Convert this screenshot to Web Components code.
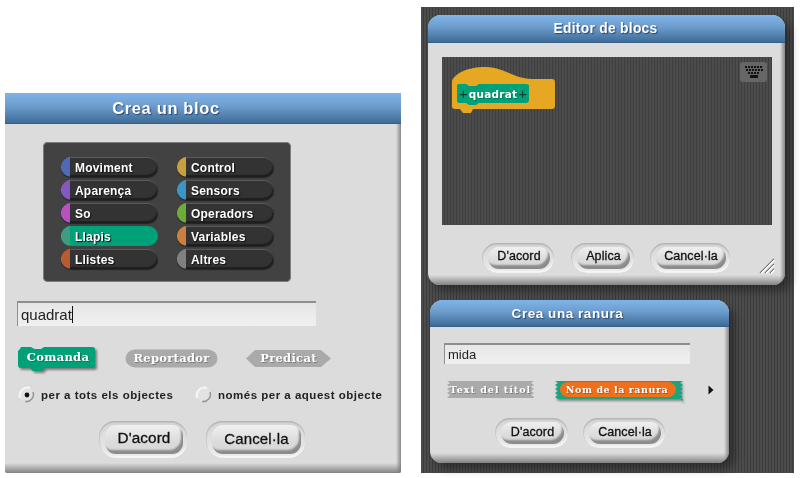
<!DOCTYPE html>
<html>
<head>
<meta charset="utf-8">
<title>Crea un bloc</title>
<style>
    html, body { margin: 0; padding: 0; background: white; }
    body { width: 800px; height: 478px; overflow: hidden; position: relative; font-family: "Liberation Sans", sans-serif; filter: blur(.4px); }
    .stripes {
        position: absolute; left: 421px; top: 7px; width: 373px; height: 466px;
        background: repeating-linear-gradient(90deg, #4c4c4c 0 2px, #3c3c3c 2px 3px);
    }
    #create { left: 5px; top: 93px; width: 396px; height: 380px; }
    #editor { left: 428px; top: 15px; width: 357px; height: 270px; }
    #slot { left: 430px; top: 300px; width: 299px; height: 163px; }
</style>
</head>
<body>
<div class="stripes"></div>

<snap-dialog id="create" square title-height="31" title-size="16.5" title-spacing=".65" title-shift="-37" heading="Crea un bloc">
    <div style="display:flex;flex-direction:column;padding:18px 0 0 12px">
        <snap-palette style="margin-left:26px">
            <snap-category color="#5068b8">Moviment</snap-category>
            <snap-category color="#c9a040">Control</snap-category>
            <snap-category color="#8458c0">Aparença</snap-category>
            <snap-category color="#3c94c8">Sensors</snap-category>
            <snap-category color="#b850c0">So</snap-category>
            <snap-category color="#6cac38">Operadors</snap-category>
            <snap-category color="#3f9c80" active>Llapis</snap-category>
            <snap-category color="#cc8040">Variables</snap-category>
            <snap-category color="#b85c30">Llistes</snap-category>
            <snap-category color="#808080">Altres</snap-category>
        </snap-palette>
        <snap-input style="margin-top:19px;width:299px;height:25px;font-size:15px" caret>quadrat</snap-input>
        <div style="display:flex;align-items:flex-end;margin:20px 0 0 1px;height:26px">
            <snap-block shape="command" w="80" h="26">Comanda</snap-block>
            <snap-block shape="reporter" w="93" h="19" style="margin-left:27px;margin-bottom:4px">Reportador</snap-block>
            <snap-block shape="predicate" w="85" h="19" style="margin-left:28px;margin-bottom:4px">Predicat</snap-block>
        </div>
        <div style="display:flex;align-items:center;margin-top:13px;height:20px">
            <snap-radio checked style="width:177px">per a tots els objectes</snap-radio>
            <snap-radio>només per a aquest objecte</snap-radio>
        </div>
        <div style="display:flex;margin:16px 0 0 82px;gap:19px">
            <snap-button style="width:88px;height:37px;font-size:15.3px">D'acord</snap-button>
            <snap-button style="width:99px;height:37px;font-size:15px">Cancel·la</snap-button>
        </div>
    </div>
</snap-dialog>

<snap-dialog id="editor" title-height="28" title-size="13.8" title-spacing=".3" title-shift="-1" heading="Editor de blocs">
    <div style="display:flex;flex-direction:column;padding:14px 0 0 14px">
        <snap-scripts style="width:330px;height:168px"></snap-scripts>
        <div style="display:flex;margin:16px 0 0 40px;align-items:center">
            <snap-button style="width:72px;height:30px;font-size:12.5px">D'acord</snap-button>
            <snap-button style="width:63px;height:30px;font-size:12.5px;margin-left:17px">Aplica</snap-button>
            <snap-button style="width:80px;height:30px;font-size:12.5px;margin-left:16px">Cancel·la</snap-button>
            <svg width="16" height="16" viewBox="0 0 16 16" style="margin:17px 0 0 29px" fill="none" stroke-width="1.2">
                <path d="M1 15L15 1M6 15L15 6M11 15L15 11" stroke="#6c6c6c"/>
                <path d="M2 15.5L15.5 2M7 15.5L15.5 7M12 15.5L15.5 12" stroke="#fff"/>
            </svg>
        </div>
    </div>
</snap-dialog>

<snap-dialog id="slot" title-height="27" title-size="13.5" title-spacing=".55" title-shift="-12" heading="Crea una ranura">
    <div style="display:flex;flex-direction:column;padding:16px 0 0 14px">
        <snap-input style="width:246px;height:21px;font-size:13px">mida</snap-input>
        <div style="display:flex;align-items:center;margin-top:15px;height:21px">
            <snap-block shape="fragment" w="87" h="19" size="9.5" spacing="1" style="margin-left:3px">Text del títol</snap-block>
            <snap-block shape="slot" w="128" h="20" size="9.5" spacing=".55" shift="4" style="margin-left:21px">Nom de la ranura</snap-block>
            <svg width="6" height="10" viewBox="0 0 6 10" style="margin-left:25px"><path d="M0.5 0.5L5.5 5L0.5 9.5Z" fill="#111"/></svg>
        </div>
        <div style="display:flex;margin:18px 0 0 51px;gap:15px">
            <snap-button style="width:73px;height:30px;font-size:12.5px">D'acord</snap-button>
            <snap-button style="width:82px;height:30px;font-size:12.5px">Cancel·la</snap-button>
        </div>
    </div>
</snap-dialog>

<script>
const FONT = '"Liberation Sans", Arial, sans-serif';
const BLOCK_FONT = '"DejaVu Serif", "Liberation Serif", serif';

class SnapDialog extends HTMLElement {
    constructor() {
        super();
        this.attachShadow({ mode: 'open' });
    }
    connectedCallback() {
        const h = this.getAttribute('title-height') || 28;
        const size = this.getAttribute('title-size') || 14;
        const spacing = this.getAttribute('title-spacing') || 0.4;
        const shift = this.getAttribute('title-shift') || 0;
        const radius = this.hasAttribute('square') ? 0 : 13;
        const bottom = this.hasAttribute('square') ? 2 : 12;
        this.shadowRoot.innerHTML = `
            <style>
                :host {
                    position: absolute; display: flex; flex-direction: column;
                    background: #dcdcdc; font-family: ${FONT};
                    border-radius: ${radius}px ${radius}px ${bottom}px ${bottom}px;
                    box-shadow: 6px 6px 8px rgba(0,0,0,${radius ? .35 : 0});
                    overflow: hidden;
                }
                .title {
                    flex: none; height: ${h}px; display: flex; align-items: center; justify-content: center;
                    background: linear-gradient(#80b4e8, #6c9ccc 45%, #3e6c98);
                    color: #fff; font-weight: bold; font-size: ${size}px; letter-spacing: ${spacing}px;
                    text-shadow: 1px 1px 1px rgba(30,50,80,.75);
                    border-bottom: 1px solid #385f88; box-sizing: border-box;
                }
                .title span { transform: translateX(${shift}px); }
                .body { flex: 1; min-height: 0; }
                .edge-right {
                    position: absolute; top: ${h}px; right: 0; bottom: 0; width: 5px;
                    background: linear-gradient(90deg, rgba(120,120,120,0), rgba(120,120,120,.85));
                }
                .edge-bottom {
                    position: absolute; left: 0; right: 0; bottom: 0; height: 10px;
                    background: linear-gradient(rgba(120,120,120,0), rgba(120,120,120,.9));
                }
            </style>
            <div class="title"><span>${this.getAttribute('heading')}</span></div>
            <div class="body"><slot></slot></div>
            <div class="edge-right"></div>
            <div class="edge-bottom"></div>`;
    }
}

class SnapPalette extends HTMLElement {
    constructor() {
        super();
        this.attachShadow({ mode: 'open' }).innerHTML = `
            <style>
                :host {
                    display: grid; grid-template-columns: 97px 97px; column-gap: 19px; row-gap: 3px;
                    width: 248px; height: 140px; box-sizing: border-box; padding: 15px 18px;
                    background: #424242; border-radius: 5px; box-shadow: inset 0 0 0 1px #7c7c7c;
                }
            </style>
            <slot></slot>`;
    }
}

class SnapCategory extends HTMLElement {
    constructor() {
        super();
        this.attachShadow({ mode: 'open' });
    }
    connectedCallback() {
        const color = this.getAttribute('color');
        const active = this.hasAttribute('active');
        this.shadowRoot.innerHTML = `
            <style>
                :host {
                    display: flex; align-items: center; height: 20px; border-radius: 10px; overflow: hidden;
                    background: ${active ? '#00a178' : '#333'};
                    box-shadow: ${active ? 'none' : 'inset 0 1px 0 #5a5a5a, inset -1px -2px 1px #1e1e1e, 0 1px 1px #222'};
                    color: #fff; font: bold 12px ${FONT}; letter-spacing: .2px;
                    text-shadow: 1px 1px 1px #111;
                }
                .tab { flex: none; width: 9px; height: 100%; background: ${color}; margin-right: 5px; box-shadow: inset 1px 1px 1px rgba(255,255,255,.15); }
                .text { padding-top: 2px; }
            </style>
            <span class="tab"></span><span class="text"><slot></slot></span>`;
    }
}

class SnapInput extends HTMLElement {
    constructor() {
        super();
        this.attachShadow({ mode: 'open' });
    }
    connectedCallback() {
        const caret = this.hasAttribute('caret') ? '<i></i>' : '';
        this.shadowRoot.innerHTML = `
            <style>
                :host {
                    display: flex; align-items: center; box-sizing: border-box; padding-left: 3px;
                    background: linear-gradient(#e6e6e6, #f0f0f0);
                    border-top: 2px solid #8e8e8e; border-left: 1px solid #8e8e8e;
                    color: #222; font-family: ${FONT};
                }
                i { width: 1px; height: 17px; background: #111; }
            </style>
            <slot></slot>${caret}`;
    }
}

class SnapRadio extends HTMLElement {
    constructor() {
        super();
        this.attachShadow({ mode: 'open' });
    }
    connectedCallback() {
        const dot = this.hasAttribute('checked') ? '<circle cx="11" cy="11" r="2.4" fill="#111"/>' : '';
        this.shadowRoot.innerHTML = `
            <style>
                :host {
                    display: flex; align-items: center; gap: 3px;
                    color: #222; font: bold 11.5px ${FONT}; letter-spacing: .5px; white-space: nowrap;
                }
                svg { flex: none; margin-left: -1px; }
            </style>
            <svg width="22" height="22" viewBox="0 0 22 22" fill="none">
                <circle cx="11" cy="11" r="7.5" fill="#e2e2e2"/>
                <path d="M4 14A8 8 0 0 1 14 4" stroke="#f6f6f6" stroke-width="2"/>
                <path d="M17 8A7.2 7.2 0 0 1 9 17.5" stroke="#989898" stroke-width="1.6"/>
                ${dot}
            </svg>
            <slot></slot>`;
    }
}

class SnapButton extends HTMLElement {
    constructor() {
        super();
        this.attachShadow({ mode: 'open' }).innerHTML = `
            <style>
                :host {
                    display: flex; box-sizing: border-box; padding: 4px 4px 4px 6px;
                    border-radius: 16px;
                    background: linear-gradient(#d4d4d4, #ececec);
                    box-shadow: inset 0 1.5px 1px #b4b4b4, inset 1px 0 1px #cccccc, inset 0 -2px 1px #f8f8f8;
                    color: #111; font-family: ${FONT}; letter-spacing: .1px;
                    -webkit-text-stroke: .3px #111;
                }
                div {
                    flex: 1; display: flex; align-items: center; justify-content: center;
                    border-radius: 11px; padding-bottom: 3px;
                    background: linear-gradient(#f0f0f0, #dcdcdc 55%, #d6d6d6);
                    box-shadow: inset -3px -5px 2px -1px #8c8c8c;
                }
            </style>
            <div><slot></slot></div>`;
    }
}

// jagged left and right edges of the hat-less fragment shapes
function zigzag(w, h) {
    let left = '', right = '';
    for (let y = 1; y < h - 2; y += 4) {
        right += `L${w - 3} ${y + 2}L${w} ${y + 4}`;
        left = `L3 ${y + 2}L0 ${y}` + left;
    }
    return `M0 1H${w}${right}L${w} ${h - 1}H0${left}Z`;
}

const SHAPES = {
    command: (w, h) => `<path d="M2 3Q2 1 4 1H13L16 3H23L26 1H${w - 6}Q${w - 3} 1 ${w - 3} 3V${h - 6}Q${w - 3} ${h - 4} ${w - 5} ${h - 4}H27L24 ${h - 1}H15L12 ${h - 4}H3Q0 ${h - 4} 0 ${h - 7}V5Z" fill="#00a178" style="filter:drop-shadow(2px 2px 1px rgba(60,60,60,.6))"/>`,
    reporter: (w, h) => `<rect x=".5" y=".5" width="${w - 1}" height="${h - 1}" rx="${h / 2}" fill="#aaa"/>`,
    predicate: (w, h) => `<path d="M0 ${h / 2}L9 1H${w - 10}L${w} ${h / 2}L${w - 10} ${h - 1}H9Z" fill="#aaa"/>`,
    fragment: (w, h) => `<path d="${zigzag(w, h)}" fill="#aaa"/>`,
    slot: (w, h) => `<path d="${zigzag(w, h)}" fill="#16a57c" style="filter:drop-shadow(1px 2px 1px rgba(60,60,60,.55))"/><rect x="5" y="2" width="${w - 12}" height="${h - 5}" rx="${(h - 5) / 2}" fill="#ee6f1c"/>`
};

class SnapBlock extends HTMLElement {
    constructor() {
        super();
        this.attachShadow({ mode: 'open' });
    }
    connectedCallback() {
        const shape = this.getAttribute('shape');
        const w = +this.getAttribute('w');
        const h = +this.getAttribute('h');
        const size = this.getAttribute('size') || 11.5;
        const spacing = this.getAttribute('spacing') || 0.3;
        const shift = this.getAttribute('shift') || 0;
        this.shadowRoot.innerHTML = `
            <style>
                :host {
                    display: inline-grid; flex: none; width: ${w}px; height: ${h}px;
                    color: #fff; font: bold ${size}px ${BLOCK_FONT}; letter-spacing: ${spacing}px;
                    text-shadow: 1px 1px 0 rgba(40,40,40,.35);
                }
                svg, span { grid-area: 1 / 1; }
                svg { overflow: visible; }
                span { display: flex; align-items: center; justify-content: center; white-space: nowrap; padding: 0 ${shift}px ${shape === 'command' ? 4 : 1}px 0; }
            </style>
            <svg width="${w}" height="${h}" viewBox="0 0 ${w} ${h}">${SHAPES[shape](w, h)}</svg>
            <span><slot></slot></span>`;
    }
}

class SnapScripts extends HTMLElement {
    constructor() {
        super();
        this.attachShadow({ mode: 'open' }).innerHTML = `
            <style>
                :host {
                    display: flex; justify-content: space-between; align-items: flex-start;
                    box-sizing: border-box; padding: 5px 5px 0 10px;
                    background: repeating-linear-gradient(90deg, #4c4c4c 0 2px, #3e3e3e 2px 3px);
                }
                .hat { display: grid; width: 104px; height: 47px; margin-top: 5px; }
                .hat > * { grid-area: 1 / 1; }
                .inner {
                    align-self: start; justify-self: start; margin: 16px 0 0 5px;
                    display: grid; width: 72px; height: 22px;
                }
                .inner > * { grid-area: 1 / 1; }
                .label {
                    display: flex; align-items: center; justify-content: center; padding-bottom: 1px;
                    color: #fff; font: bold 10.5px "DejaVu Sans", ${FONT}; letter-spacing: .2px;
                    text-shadow: 1px 1px 0 rgba(0,60,40,.4);
                }
                .label b { font: normal 15px ${FONT}; color: #0f3f30; text-shadow: none; }
                .keys { display: flex; align-items: center; justify-content: center; width: 27px; height: 20px; background: #666; border-radius: 3px; }
            </style>
            <div class="hat">
                <svg width="104" height="47" viewBox="0 0 104 47">
                    <path d="M0 14C3 6 16 0 34 0C52 0 62 12 80 12H100Q103 12 103 15V39Q103 42 100 42H21L19 46H11L8 42H3Q0 42 0 39Z" fill="#e6a822"/>
                </svg>
                <div class="inner">
                    <svg width="72" height="22" viewBox="0 0 72 22">
                        <path d="M0 3Q0 1 2 1H9L12 3H19L22 1H69Q72 1 72 3V17Q72 20 69 20H22L19 22H12L9 20H2Q0 20 0 17Z" fill="#00a178"/>
                    </svg>
                    <div class="label"><b>+</b><span style="margin:0 1px">quadrat</span><b>+</b></div>
                </div>
            </div>
            <div class="keys">
                <svg width="18" height="13" viewBox="0 0 18 13" fill="#111">
                    <path d="M0 0h2v2H0zM3 0h2v2H3zM6 0h2v2H6zM9 0h2v2H9zM12 0h2v2h-2zM15 0h2v2h-2zM1 3h2v2H1zM4 3h2v2H4zM7 3h2v2H7zM10 3h2v2h-2zM13 3h2v2h-2zM16 3h2v2h-2zM3 6h2v2H3zM6 6h2v2H6zM9 6h2v2H9zM12 6h2v2h-2zM5 9h8v3H5z"/>
                </svg>
            </div>`;
    }
}

customElements.define('snap-dialog', SnapDialog);
customElements.define('snap-palette', SnapPalette);
customElements.define('snap-category', SnapCategory);
customElements.define('snap-input', SnapInput);
customElements.define('snap-radio', SnapRadio);
customElements.define('snap-button', SnapButton);
customElements.define('snap-block', SnapBlock);
customElements.define('snap-scripts', SnapScripts);
</script>
</body>
</html>
